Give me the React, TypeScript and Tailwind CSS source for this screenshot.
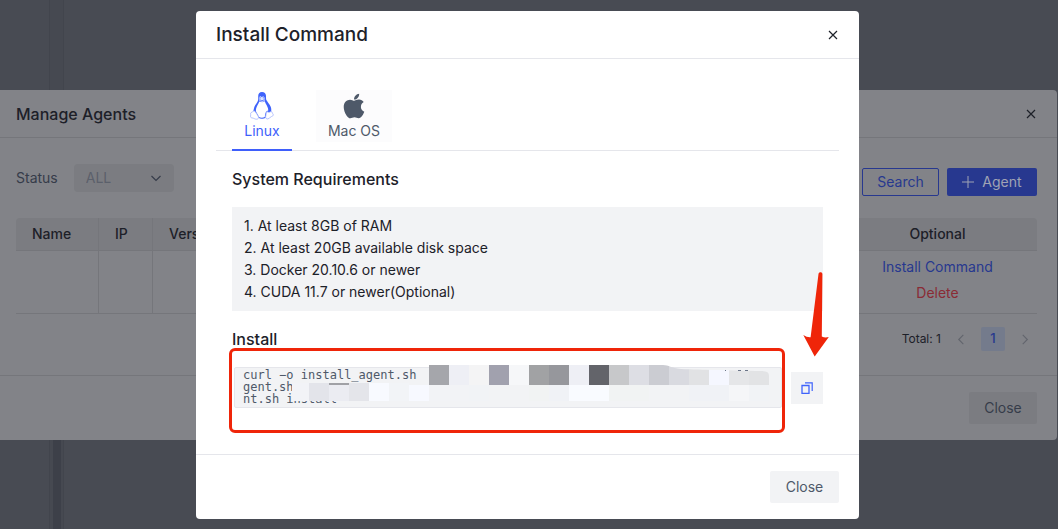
import React from "react";
import { FaApple } from "react-icons/fa";

function CloseIcon() {
  return (
    <svg width="10" height="10" viewBox="0 0 10 10" fill="none" stroke="currentColor" strokeWidth="1.2" aria-hidden="true">
      <path d="M1 1l8 8M9 1L1 9" />
    </svg>
  );
}

function Chevron({ d, size }: { d: string; size: number }) {
  return (
    <svg width={size} height={size} viewBox="0 0 12 12" fill="none" stroke="currentColor" strokeWidth="1.2" aria-hidden="true">
      <path d={d} />
    </svg>
  );
}

function PenguinIcon() {
  return (
    <svg width="24" height="28" viewBox="0 0 24 28" fill="none" aria-hidden="true">
      <path
        d="M12 0C9.4 0 8.2 1.8 8.2 4.3c0 2 .3 3.6-.6 5.3C6.300 12 4.600 13.400 4 16.200c-.4 1.700-.7 2.700-1.200 3.900l3.400 1.200c1 1.400 1.800 3 2.200 4.500 2 1.200 5.200 1.200 7.300 0 .2-1.900.4-3.700 1.200-5l4-.5c.6-1.400.5-3.800-.2-5.600-.9-2.300-3-4.300-4.200-6.400-.7-1.300-.4-2.800-.5-4.600C15.900 1.400 14.400 0 12 0z"
        fill="#3f63fb"
      />
      <path
        d="M9.300 9.500C8.600 12 6.600 14 6 17c-.3 1.600 0 2.800.8 4 1 1.400 1.600 2.400 2 4 1.900 1 4.300.9 6 0 .2-2.200.4-4.200 1.600-5.500.9-.8 1.800-.7 1.800-.7.500-3.500-2.400-6.300-3.400-9.600L12.100 10.300z"
        fill="#fff"
      />
      <path d="M9.300 5.300c.3-1.200 1.800-1.300 2.300 0 .6-1.300 2.600-1.200 2.900.2.200 1.100-.1 1.800.2 3.200l-2.600 1.400-2.700-1.400c.2-1.200-.3-2.300-.1-3.400z" fill="#dfe6ff" />
      <path d="M10.200 5.200v1.200M13.300 5.200v1.200M9.900 7.800l2 1 2.300-1" stroke="#3f63fb" strokeWidth=".8" />
      <path
        d="M3.200 19.300c-.5 1-2.400.9-2.600 2 -.1 1 .3 1.700 0 2.700-.3 1.200.2 1.700 1.500 1.900 1.700.2 2.900 1.400 4.500 1.300 1.500 0 2.300-1.200 1.700-2.600-.8-1.700-2-3.300-3-4.800-.7-.9-1.700-1.300-2.100-.5zM17 19.600c-.9.800-.9 3.200-1.300 5-.3 1.600.8 2.700 2.300 2.300 1.400-.4 2-1.700 3.400-2.300 1.200-.6 2.200-1.100 1.900-1.900-.3-.9-1.100-1.500-1.400-2.600-.3-1-.8-.8-1.500-.3-1.200.9-2.300.6-3.400-.2z"
        fill="#fff"
        stroke="#a3b4fd"
        strokeWidth=".8"
      />
    </svg>
  );
}

function CopyIcon() {
  return (
    <svg width="12" height="12" viewBox="0 0 12 12" fill="none" stroke="#3f63fb" aria-hidden="true">
      <path d="M1 3.500h7v8H1z" strokeWidth="1.300" />
      <path d="M4 .8h7.200v8.200" strokeWidth="1.200" />
    </svg>
  );
}

const topCells = ["#a5a6ab", "#eeeff5", "#f4f4f5", "#a1a1ae", "#f6f7f9", "#a1a2a4", "#96979c", "#eeeff5", "#63646a", "#c7c8ca", "#dddee4"];
const tailCells = ["#cbccd2", "#d9dae0", "#e1e2e4", "#f5f7ff", "#e5e6e8", "#e2e3e5"];
const bottomCells = [
  "#f2f3f7", "#e3e4ea", "#ebecf2", "#e4e5ea", "#f8faff", "#f2f4f7", "#f7f9ff", "#f2f3f6", "#f2f3f6", "#f1f3f6", "#f2f3f5", "#f2f3f5",
  "#f1f3f3", "#f0f2f6", "#f9fbff", "#f9fbff", "#f1f3f3", "#f1f3f3", "#f2f3f5", "#f2f3f5", "#f0f2f6", "#f0f2f6", "#f5f6f8", "#f1f3f6",
];

function Mosaic() {
  return (
    <svg className="absolute -top-0.5 left-[55px]" width="480" height="36" viewBox="0 0 480 36" shapeRendering="crispEdges" aria-hidden="true">
      <defs>
        <clipPath id="tail">
          <path d="M360 0h14c6 0 8 3 18 4 24 1 42 1 74 2 10 0 14 0 14 5v9H360z" />
        </clipPath>
      </defs>
      {topCells.map((c, i) => (
        <rect key={i} x={140 + i * 20} y="0" width="20" height="20" fill={c} />
      ))}
      <g clipPath="url(#tail)">
        {tailCells.map((c, i) => (
          <rect key={i} x={360 + i * 20} y="0" width="20" height="20" fill={c} />
        ))}
      </g>
      {bottomCells.map((c, i) => (
        <rect key={i} x={(i ? 0 : 3) + i * 20} y={i < 6 ? 18 : 20} width={i ? 20 : 17} height={i < 6 ? 18 : 16} fill={c} />
      ))}
      <path d="M40 18h20v2h-20z" fill="#a0a1a6" />
      <path d="M436 5h1v1h-1zM449 5h3v1h-3zM456 5h3v1h-3z" fill="#6b7588" />
    </svg>
  );
}

function ManageAgents() {
  return (
    <section aria-label="Manage Agents" className="relative mr-px rounded-r bg-[#828388] text-[#1d2028]">
      <header className="flex h-12 items-center justify-between border-b border-[#75767b] pr-[21px] pl-4">
        <h2 className="text-base font-medium">Manage Agents</h2>
        <button type="button" aria-label="Close Manage Agents"><CloseIcon /></button>
      </header>
      <div className="pt-[26px] pr-5 pb-6 pl-4">
        <div className="flex h-8 justify-between">
          <div className="flex h-7 items-center gap-4 text-sm text-[#363c4a]">
            <label htmlFor="status">Status</label>
            <div className="relative">
              <select id="status" className="h-7 w-[100px] appearance-none rounded-sm bg-[#7b7c81] pl-3 text-sm text-[#5b606b]">
                <option>ALL</option>
              </select>
              <span className="pointer-events-none absolute top-2 right-3"><Chevron size={12} d="M1.500 4L6 8.500 10.500 4" /></span>
            </div>
          </div>
          <div className="flex h-7 gap-2 self-end text-sm">
            <button type="button" className="w-[77px] rounded-xs border border-[#27388f] text-[#27388f]">Search</button>
            <button type="button" className="flex w-[90px] items-center justify-center gap-2 rounded-xs bg-[#27388f] text-[#a0a3b4]">
              <svg width="12" height="12" viewBox="0 0 12 12" stroke="currentColor" aria-hidden="true"><path d="M6 0v12M0 6h12" /></svg>
              Agent
            </button>
          </div>
        </div>
        <table className="mt-[22px] w-full table-fixed border-separate border-spacing-0 text-sm">
          <thead>
            <tr className="h-[33px] text-left">
              <th className="w-[83px] rounded-tl border-r border-b border-[#75767b] bg-[#7b7c81] pl-4 font-medium">Name</th>
              <th className="w-[54px] border-r border-b border-[#75767b] bg-[#7b7c81] pl-4 font-medium">IP</th>
              <th className="border-r border-b border-[#75767b] bg-[#7b7c81] pl-4 font-medium">Version</th>
              <th className="w-[199px] rounded-tr border-b border-[#75767b] bg-[#7b7c81] text-center font-medium">Optional</th>
            </tr>
          </thead>
          <tbody>
            <tr className="h-[63px]">
              <td className="border-r border-b border-[#75767b]" />
              <td className="border-r border-b border-[#75767b]" />
              <td className="border-r border-b border-[#75767b]" />
              <td className="border-b border-[#75767b] pb-1">
                <div className="flex flex-col items-center gap-1.5">
                  <button type="button" className="text-[#27388f]">Install Command</button>
                  <button type="button" className="text-[#8a2b35]">Delete</button>
                </div>
              </td>
            </tr>
          </tbody>
        </table>
        <nav aria-label="Pagination" className="mt-[13px] flex items-center justify-end text-xs">
          <span className="mr-2">Total: 1</span>
          <button type="button" aria-label="Previous page" className="mr-2 flex size-6 items-center justify-center text-[#62656d]"><Chevron size={11} d="M8 1L3 6l5 5" /></button>
          <button type="button" className="size-6 rounded-xs bg-[#747b8c] text-[13px] font-medium text-[#27388f]">1</button>
          <button type="button" aria-label="Next page" className="ml-2 flex size-6 items-center justify-center text-[#62656d]"><Chevron size={11} d="M3 1l5 5-5 5" /></button>
        </nav>
      </div>
      <footer className="flex justify-end border-t border-[#75767b] py-4 pr-5">
        <button type="button" className="h-8 w-[68px] rounded-xs bg-[#7b7c81] text-sm text-[#363c4a]">Close</button>
      </footer>
    </section>
  );
}

function InstallCommand() {
  return (
    <section role="dialog" aria-label="Install Command" className="w-full max-w-[663px] rounded bg-white text-[#1d2129]">
      <header className="flex h-12 items-center justify-between border-b border-[#e5e6eb] pr-[21px] pl-5">
        <h1 className="text-[19px] leading-6 font-medium">Install Command</h1>
        <button type="button" aria-label="Close Install Command"><CloseIcon /></button>
      </header>
      <div className="px-5 pt-[31px] pb-[46px]">
        <div role="tablist" className="flex gap-6 border-b border-[#e5e6eb] px-4 text-sm">
          <button type="button" role="tab" aria-selected="true" className="-mb-px flex h-[61px] w-[60px] flex-col items-center border-b-2 border-[#3f5ffb] pt-0.5 leading-[22px] text-[#3f5ffb]">
            <PenguinIcon />
            Linux
          </button>
          <button type="button" role="tab" aria-selected="false" className="flex h-[52px] w-[76px] flex-col items-center bg-[#fcfcfd] pt-0.5 leading-[22px] text-[#4e5969]">
            <FaApple size={28} />
            Mac OS
          </button>
        </div>
        <div className="px-4 pt-4">
          <h2 className="text-base font-medium">System Requirements</h2>
          <ol className="mt-4 bg-[#f2f3f5] px-3 py-2 text-sm leading-[22px]">
            <li>1. At least 8GB of RAM</li>
            <li>2. At least 20GB available disk space</li>
            <li>3. Docker 20.10.6 or newer</li>
            <li>4. CUDA 11.7 or newer(Optional)</li>
          </ol>
          <h2 className="mt-4 text-base font-medium">Install</h2>
          <div className="mt-4 flex items-center gap-[9px]">
            <div className="relative ml-0.5 flex-1">
              <pre className="h-[41px] rounded-xs border border-[#e5e6eb] bg-[#f2f3f5] px-2 py-px font-['DejaVu_Sans_Mono',monospace] text-xs leading-3 text-[#4e5969]">
                {"curl −o install_agent.sh\ngent.sh\nnt.sh install"}
              </pre>
              <Mosaic />
              <div className="pointer-events-none absolute -top-[19px] -right-[3px] -bottom-[25px] -left-[5px] rounded-md border-3 border-[#ef2509]" />
            </div>
            <div className="relative">
              <button type="button" aria-label="Copy command" className="flex size-8 items-center justify-center bg-[#f2f3f5]"><CopyIcon /></button>
              <svg className="pointer-events-none absolute -top-[101px] left-[11px] max-w-none" width="28" height="86" viewBox="0 0 28 86" aria-hidden="true">
                <path d="M16.500 3C16.700.6 20.300.5 20.400 3L19.800 65.500Q23 67.200 26.800 66L12.700 85.500 1.300 64Q5 66.600 8.600 66.300z" fill="#ef2509" />
              </svg>
            </div>
          </div>
        </div>
      </div>
      <footer className="flex justify-end border-t border-[#e5e6eb] py-4 pr-5">
        <button type="button" className="h-8 w-[69px] rounded-xs bg-[#f2f3f5] text-sm text-[#4e5969]">Close</button>
      </footer>
    </section>
  );
}

export default function App() {
  return (
    <main className="relative min-h-screen overflow-hidden bg-[#484b53] pt-[90px] font-[Inter,sans-serif]">
      <div className="absolute inset-y-0 left-[49px] w-[15px] border-x border-[#42454d] bg-[#464951]" />
      <div className="absolute top-[440px] bottom-0 left-[53px] w-2 bg-[#3d4049]" />
      <ManageAgents />
      <div className="absolute inset-0 flex items-start justify-center pt-[11px] pr-[3px]">
        <InstallCommand />
      </div>
    </main>
  );
}
